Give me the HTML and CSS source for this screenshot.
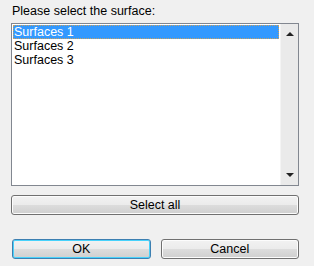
FILE: index.html
```html
<!DOCTYPE html>
<html>
<head>
    <title>Select surface</title>
    <meta name="viewport" content="width=device-width, initial-scale=1">
    <link rel="stylesheet" href="styles.css">
</head>
<body>
    <div class="dialog">
        <div class="prompt">Please select the surface:</div>

        <div class="listbox">
            <ul class="items">
                <li class="item selected"><span>Surfaces 1</span></li>
                <li class="item"><span>Surfaces 2</span></li>
                <li class="item"><span>Surfaces 3</span></li>
            </ul>
            <div class="scrollbar">
                <div class="arrow up"></div>
                <div class="arrow down"></div>
            </div>
        </div>

        <button class="btn select-all">Select all</button>

        <div class="actions">
            <button class="btn default">OK</button>
            <button class="btn">Cancel</button>
        </div>
    </div>
</body>
</html>
```

FILE: styles.css
```css
body {
    margin: 0;
    background-color: #f0f0f0;
    font-family: "Liberation Sans", Arial, sans-serif;
    font-size: 12.5px;
    color: #000;
}

.dialog {
    display: flex;
    flex-direction: column;
    padding: 3px 15px 0 11px;
}

.prompt {
    height: 20px;
    line-height: 16px;
    padding-left: 1px;
}

.listbox {
    display: flex;
    height: 161px;
    border: 1px solid #828790;
    background-color: #fff;
}

.items {
    flex: 1;
    list-style: none;
    margin: 0;
    padding: 1px 1px 0 1px;
}

.item {
    height: 14px;
    line-height: 14px;
    padding-left: 1px;
    white-space: nowrap;
}

.item.selected {
    background-color: #3399ff;
    color: #fff;
    outline: 1px dotted #c8a060;
    outline-offset: -1px;
}

.scrollbar {
    width: 17px;
    display: flex;
    flex-direction: column;
    justify-content: space-between;
    align-items: center;
    background-color: #eaeaea;
    border-left: 1px solid #f4f4f4;
    padding: 8px 0;
}

.arrow {
    width: 0;
    height: 0;
    border-left: 4px solid transparent;
    border-right: 4px solid transparent;
}

.arrow.up {
    border-bottom: 4px solid #222;
}

.arrow.down {
    border-top: 4px solid #222;
}

.btn {
    height: 20px;
    padding: 0;
    font-family: inherit;
    font-size: 12.5px;
    color: #000;
    border: 1px solid #707070;
    border-radius: 3px;
    background: linear-gradient(#f2f2f2 0%, #ebebeb 50%, #dddddd 50%, #cfcfcf 100%);
    box-shadow: inset 0 0 0 1px #fcfcfc;
}

.select-all {
    margin-top: 9px;
}

.actions {
    display: grid;
    grid-template-columns: 1fr 1fr;
    gap: 10px;
    margin-top: 24px;
    padding-left: 1px;
}

.btn.default {
    border-color: #3c7fb1;
    box-shadow: inset 0 0 0 1px #48d2fb;
}
```
